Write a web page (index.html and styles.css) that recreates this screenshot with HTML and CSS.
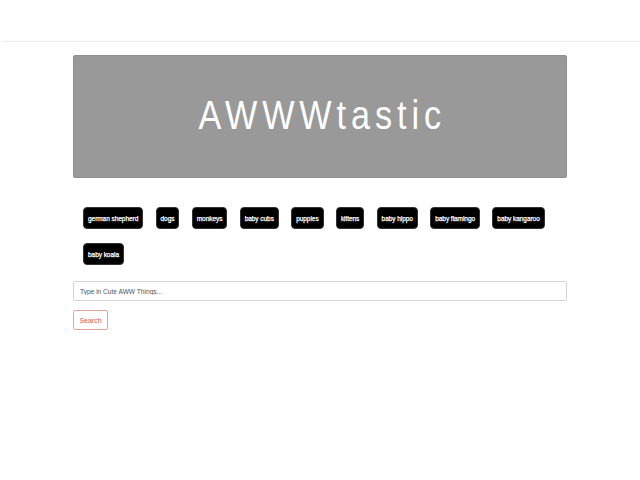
FILE: index.html
```html
<!DOCTYPE html>
<html>
<head>
<meta charset="utf-8">
<link rel="stylesheet" href="styles.css">
</head>
<body>
<nav class="navbar"></nav>
<main class="container">
  <header class="jumbotron">
    <h1 class="title"><span class="title-text">AWWWtastic</span></h1>
  </header>
  <div class="tags">
    <button class="tag">german shepherd</button>
    <button class="tag">dogs</button>
    <button class="tag">monkeys</button>
    <button class="tag">baby cubs</button>
    <button class="tag">puppies</button>
    <button class="tag">kittens</button>
    <button class="tag">baby hippo</button>
    <button class="tag">baby flamingo</button>
    <button class="tag">baby kangaroo</button>
    <button class="tag">baby koala</button>
  </div>
  <form class="search">
    <input class="search-input" type="text" placeholder="Type in Cute AWW Things...">
    <button class="search-btn" type="button">Search</button>
  </form>
</main>
</body>
</html>
```
FILE: styles.css
```css
* { box-sizing: border-box; }
body {
  margin: 0;
  background: #fff;
  font-family: "Liberation Sans", Arial, sans-serif;
}
.navbar {
  height: 42px;
  margin-left: 2px;
  border-bottom: 1px solid #ececec;
}
.container {
  width: 494px;
  margin: 0 auto;
  padding-top: 13px;
}
.jumbotron {
  height: 123px;
  background: #999;
  border: 1px solid #8f8f8f;
  border-radius: 2px;
  display: flex;
  align-items: center;
  justify-content: center;
}
.title {
  margin: 0;
  color: #fff;
  font-weight: normal;
  font-size: 40px;
  line-height: 1;
  padding-bottom: 4px;
}
.title-text {
  display: inline-block;
  letter-spacing: 5.8px;
  padding-left: 5.8px;
  transform: scaleX(0.855);
}
.tags {
  display: flex;
  flex-wrap: wrap;
  column-gap: 12.3px;
  row-gap: 14px;
  padding: 29px 10px 0 10px;
}
.tag {
  height: 22px;
  padding: 0 4px;
  background: #000;
  color: #fff;
  border: 1px solid #333;
  border-radius: 4px;
  font-family: "Liberation Sans", Arial, sans-serif;
  font-size: 6.5px;
  font-weight: normal;
  letter-spacing: -0.05px;
  -webkit-text-stroke: 0.25px #fff;
}
.search {
  display: flex;
  flex-direction: column;
  align-items: flex-start;
  gap: 9px;
  padding-top: 16px;
}
.search-input {
  width: 100%;
  height: 20px;
  border: 1px solid #d4d4d4;
  border-radius: 2px;
  padding: 0 6px;
  font-family: "Liberation Sans", Arial, sans-serif;
  font-size: 6.6px;
  color: #555;
}
.search-input::placeholder { color: #555; }
.search-btn {
  width: 35px;
  height: 20px;
  padding: 0;
  background: #fff;
  border: 1px solid #e8a2a2;
  border-radius: 2px;
  color: #d9534f;
  font-family: "Liberation Sans", Arial, sans-serif;
  font-size: 7px;
}
```
